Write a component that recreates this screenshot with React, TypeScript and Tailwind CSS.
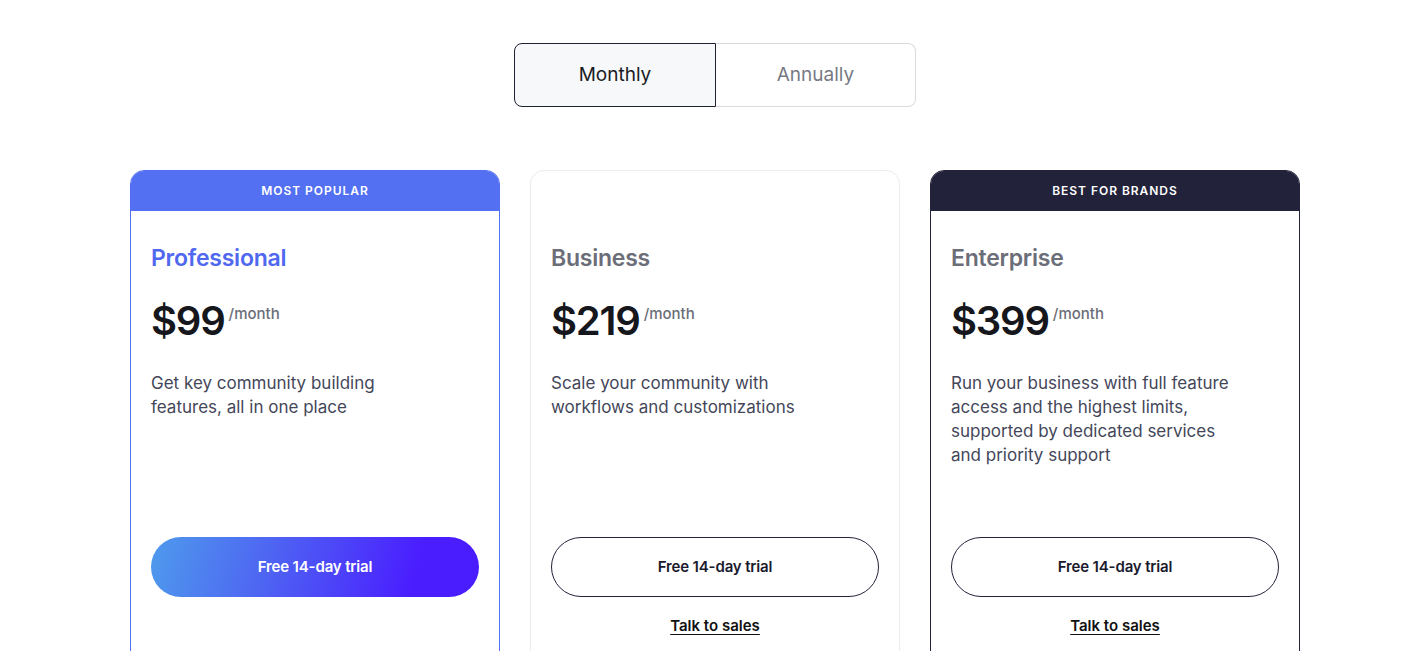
import React from "react";

const font = { fontFamily: "Inter, 'Noto Sans', sans-serif" };

type Plan = {
  banner?: string;
  bannerClass?: string;
  borderClass: string;
  name: string;
  nameClass: string;
  price: string;
  desc: string[];
  primary?: boolean;
  sales?: boolean;
};

const plans: Plan[] = [
  {
    banner: "MOST POPULAR",
    bannerClass: "bg-[#5270f1]",
    borderClass: "border-[#5270f1]",
    name: "Professional",
    nameClass: "text-[#5068ef]",
    price: "$99",
    desc: ["Get key community building", "features, all in one place"],
    primary: true,
  },
  {
    borderClass: "border-[#ebecef]",
    name: "Business",
    nameClass: "text-[#6b6e78]",
    price: "$219",
    desc: ["Scale your community with", "workflows and customizations"],
    sales: true,
  },
  {
    banner: "BEST FOR BRANDS",
    bannerClass: "bg-[#22223a]",
    borderClass: "border-[#22223a]",
    name: "Enterprise",
    nameClass: "text-[#6b6e78]",
    price: "$399",
    desc: [
      "Run your business with full feature",
      "access and the highest limits,",
      "supported by dedicated services",
      "and priority support",
    ],
    sales: true,
  },
];

function Card({ p }: { p: Plan }) {
  return (
    <div className={`w-[370px] h-[520px] rounded-t-[14px] border ${p.borderClass} bg-white overflow-hidden flex flex-col`}>
      {p.banner ? (
        <div className={`h-[40px] shrink-0 ${p.bannerClass} flex items-center justify-center text-white text-[12px] font-semibold tracking-[0.08em]`}>
          {p.banner}
        </div>
      ) : (
        <div className="h-[40px] shrink-0" />
      )}
      <div className="px-[20px] pt-[33px] flex flex-col">
        <div className={`text-[23px] leading-[28px] font-semibold tracking-[-0.01em] ${p.nameClass}`}>{p.name}</div>
        <div className="flex items-start mt-[24px] h-[50px]">
          <span className="text-[40px] leading-[50px] font-semibold text-[#16171c] tracking-[-0.03em]">{p.price}</span>
          <span className="text-[15px] leading-[20px] font-medium text-[#6b6e78] ml-[4px] mt-[8px]">/month</span>
        </div>
        <div className="mt-[25px] h-[166px] text-[17px] leading-[24px] text-[#44475a]">
          {p.desc.map((d, i) => (
            <div key={i}>{d}</div>
          ))}
        </div>
        {p.primary ? (
          <button className="h-[60px] w-[328px] rounded-full bg-[linear-gradient(105deg,#4e9bec_0%,#4e66f2_35%,#4a1dff_80%)] text-white text-[15px] font-semibold tracking-[-0.01em]">
            Free 14-day trial
          </button>
        ) : (
          <button className="h-[60px] w-[328px] rounded-full border border-[#22223a] bg-white text-[#1a1a2e] text-[15px] font-semibold tracking-[-0.01em]">
            Free 14-day trial
          </button>
        )}
        {p.sales && (
          <div className="mt-[16px] text-center">
            <span className="text-[15px] font-semibold text-[#111] underline underline-offset-[3px]">Talk to sales</span>
          </div>
        )}
      </div>
    </div>
  );
}

export default function App() {
  return (
    <div className="w-[1416px] h-[651px] bg-white overflow-hidden pl-[14px]" style={font}>
      <div className="flex justify-center pt-[43px]">
        <div className="flex">
          <div className="w-[202px] h-[64px] rounded-l-[8px] border border-[#1f2130] bg-[#f6f8fa] flex items-center justify-center text-[19px] text-[#1a1b22]">
            Monthly
          </div>
          <div className="w-[200px] h-[64px] rounded-r-[8px] border border-l-0 border-[#d8dbe0] bg-white flex items-center justify-center text-[19px] text-[#777a84]">
            Annually
          </div>
        </div>
      </div>
      <div className="flex justify-center gap-[30px] mt-[63px]">
        {plans.map((p) => (
          <Card key={p.name} p={p} />
        ))}
      </div>
    </div>
  );
}
